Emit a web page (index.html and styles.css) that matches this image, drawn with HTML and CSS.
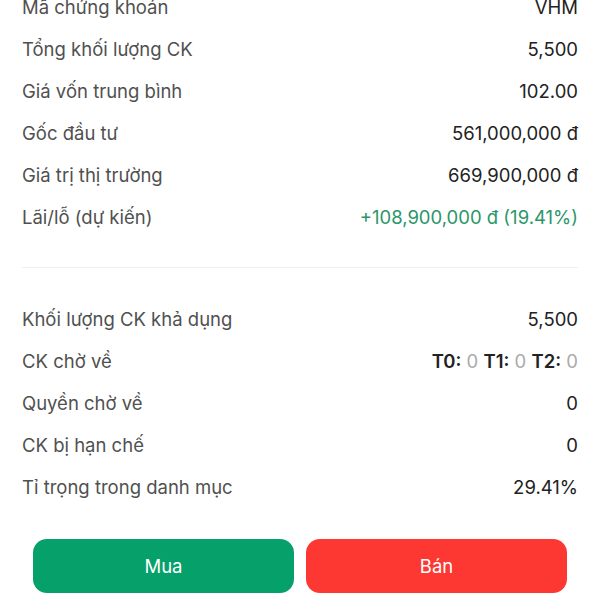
FILE: index.html
```html
<!DOCTYPE html>
<html lang="vi">
<head>
  <meta charset="UTF-8">
  <meta name="viewport" content="width=device-width, initial-scale=1.0">
  <title>Chi tiết danh mục</title>
  <link rel="stylesheet" href="styles.css">
</head>
<body>
  <!-- Position summary -->
  <div class="section first">
    <div class="row"><span class="label">Mã chứng khoán</span><span class="value">VHM</span></div>
    <div class="row"><span class="label">Tổng khối lượng CK</span><span class="value">5,500</span></div>
    <div class="row"><span class="label">Giá vốn trung bình</span><span class="value">102.00</span></div>
    <div class="row"><span class="label">Gốc đầu tư</span><span class="value">561,000,000 đ</span></div>
    <div class="row"><span class="label">Giá trị thị trường</span><span class="value">669,900,000 đ</span></div>
    <div class="row"><span class="label">Lãi/lỗ (dự kiến)</span><span class="value up">+108,900,000 đ (19.41%)</span></div>
  </div>

  <div class="divider"></div>

  <!-- Availability -->
  <div class="section">
    <div class="row"><span class="label">Khối lượng CK khả dụng</span><span class="value">5,500</span></div>
    <div class="row">
      <span class="label">CK chờ về</span>
      <span class="value"><b>T0:</b> <span class="muted">0</span> <b>T1:</b> <span class="muted">0</span> <b>T2:</b> <span class="muted">0</span></span>
    </div>
    <div class="row"><span class="label">Quyền chờ về</span><span class="value">0</span></div>
    <div class="row"><span class="label">CK bị hạn chế</span><span class="value">0</span></div>
    <div class="row"><span class="label">Tỉ trọng trong danh mục</span><span class="value">29.41%</span></div>
  </div>

  <!-- Actions -->
  <div class="actions">
    <button class="btn buy">Mua</button>
    <button class="btn sell">Bán</button>
  </div>
</body>
</html>
```

FILE: styles.css
```css
body {
  font-family: Inter, "Noto Sans", sans-serif;
  margin: 0;
  padding: 0;
  background-color: #fff;
  color: #222;
}
.section {
  padding: 0 22px;
}
.section.first {
  margin-top: -14px;
  padding-bottom: 29px;
}
.section + .actions {
  margin-top: 31px;
}
.row {
  display: flex;
  justify-content: space-between;
  align-items: center;
  height: 42px;
  font-size: 18.5px;
}
.label {
  color: #505050;
}
.value {
  color: #222;
}
.value.up {
  color: #2a9669;
}
.value b {
  font-weight: 600;
}
.value .muted {
  color: #aaa;
}
.divider {
  height: 1px;
  margin: 0 22px 30px;
  background-color: #eeeeee;
}
.actions {
  display: flex;
  gap: 12px;
  padding: 0 33px;
}
.btn {
  flex: 1;
  height: 54px;
  border: none;
  border-radius: 14px;
  font-family: Inter, "Noto Sans", sans-serif;
  font-size: 18.5px;
  color: #fff;
  cursor: pointer;
}
.btn.buy {
  background-color: #06a06a;
}
.btn.sell {
  background-color: #fd3832;
}
```
